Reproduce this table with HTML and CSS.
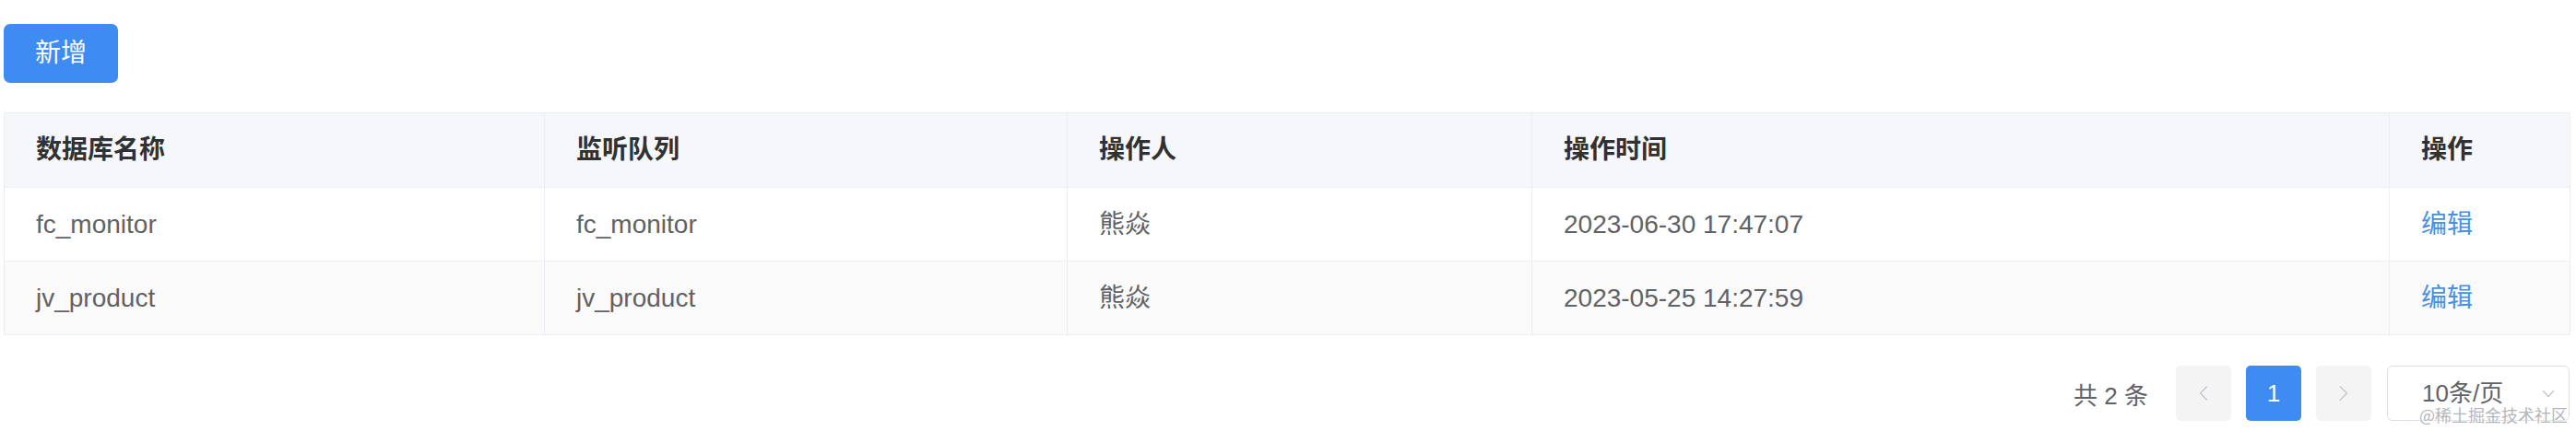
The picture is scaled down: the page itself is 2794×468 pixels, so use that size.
FILE: index.html
```html
<!DOCTYPE html>
<html lang="zh-CN">
<head>
<meta charset="utf-8">
<title>监听配置</title>
<link rel="stylesheet" href="styles.css">
</head>
<body>
<div class="page">
  <div class="toolbar">
    <button class="btn-primary" type="button">新增</button>
  </div>

  <table class="data-table">
    <colgroup>
      <col class="c1"><col class="c2"><col class="c3"><col class="c4"><col class="c5">
    </colgroup>
    <thead>
      <tr>
        <th>数据库名称</th>
        <th>监听队列</th>
        <th>操作人</th>
        <th>操作时间</th>
        <th>操作</th>
      </tr>
    </thead>
    <tbody>
      <tr>
        <td>fc_monitor</td>
        <td>fc_monitor</td>
        <td>熊焱</td>
        <td>2023-06-30 17:47:07</td>
        <td><a class="link" href="#">编辑</a></td>
      </tr>
      <tr class="striped">
        <td>jv_product</td>
        <td>jv_product</td>
        <td>熊焱</td>
        <td>2023-05-25 14:27:59</td>
        <td><a class="link" href="#">编辑</a></td>
      </tr>
    </tbody>
  </table>

  <div class="pager">
    <span class="pager-total">共 2 条</span>
    <button class="pager-btn" type="button" aria-label="上一页">
      <svg width="12" height="18" viewBox="0 0 12 18"><path d="M10 1.5 L2.5 9 L10 16.5" fill="none" stroke="#c0c4cc" stroke-width="1.4"/></svg>
    </button>
    <button class="pager-btn active" type="button">1</button>
    <button class="pager-btn" type="button" aria-label="下一页">
      <svg width="12" height="18" viewBox="0 0 12 18"><path d="M2 1.5 L9.5 9 L2 16.5" fill="none" stroke="#c0c4cc" stroke-width="1.4"/></svg>
    </button>
    <div class="pager-size">
      <span class="pager-size-text">10条/页</span>
      <svg class="pager-size-arrow" width="14" height="9" viewBox="0 0 14 9"><path d="M1 1 L7 7.5 L13 1" fill="none" stroke="#c0c4cc" stroke-width="1.3"/></svg>
    </div>
  </div>

  <div class="watermark">@稀土掘金技术社区</div>
</div>
</body>
</html>
```

FILE: styles.css
```css
* { box-sizing: border-box; }

html, body {
  margin: 0;
  padding: 0;
  background: #ffffff;
}

body {
  font-family: "Liberation Sans", "Noto Sans CJK SC", sans-serif;
  color: #606266;
}

.page {
  position: relative;
  width: 2794px;
  height: 468px;
  padding: 26px 7px 0 4px;
  overflow: hidden;
}

.toolbar {
  display: flex;
}

.btn-primary {
  width: 124px;
  height: 64px;
  border: 0;
  border-radius: 7px;
  background: #3d8bf3;
  color: #ffffff;
  font-family: "Liberation Sans", "Noto Sans CJK SC", sans-serif;
  font-size: 28px;
  line-height: 1;
  padding: 0;
}

.data-table {
  margin-top: 32px;
  width: 2783px;
  table-layout: fixed;
  border-collapse: collapse;
  border: 1px solid #ebeef5;
}

.c1 { width: 586px; }
.c2 { width: 567px; }
.c3 { width: 504px; }
.c4 { width: 930px; }
.c5 { width: 196px; }

.data-table th,
.data-table td {
  border: 1px solid #ebeef5;
  text-align: left;
  padding: 0 0 0 34px;
  font-size: 28px;
  line-height: 36px;
  white-space: nowrap;
}

.data-table th {
  height: 81px;
  background: #f5f7fa;
  color: #303133;
  font-weight: bold;
}

.data-table td {
  height: 80px;
  background: #ffffff;
  color: #606266;
}

.data-table tr.striped td {
  background: #fafafa;
}

.link {
  color: #4a90e2;
  text-decoration: none;
}

.pager {
  margin-top: 33px;
  display: flex;
  justify-content: flex-end;
  align-items: center;
}

.pager-total {
  font-size: 26px;
  color: #606266;
  margin-right: 30px;
  white-space: pre;
}

.pager-btn {
  width: 60px;
  height: 60px;
  border: 0;
  border-radius: 5px;
  background: #f4f4f5;
  padding: 0;
  display: flex;
  align-items: center;
  justify-content: center;
  font-family: "Liberation Sans", "Noto Sans CJK SC", sans-serif;
  font-size: 26px;
  color: #606266;
  margin-right: 16px;
}

.pager-btn.active {
  background: #3d8bf3;
  color: #ffffff;
}

.pager-size {
  margin-left: 1px;
  width: 198px;
  height: 60px;
  border: 1px solid #dcdfe6;
  border-radius: 6px;
  display: flex;
  align-items: center;
  padding: 0 15px 0 37px;
}

.pager-size-text {
  flex: 1;
  font-size: 26px;
  line-height: 26px;
  color: #606266;
}

.watermark {
  position: absolute;
  right: 9px;
  top: 441px;
  font-family: "Noto Sans CJK SC", sans-serif;
  font-size: 18px;
  line-height: 18px;
  color: #b4b6ba;
  text-shadow: 0 0 2px #ffffff, 0 0 2px #ffffff;
}
```
